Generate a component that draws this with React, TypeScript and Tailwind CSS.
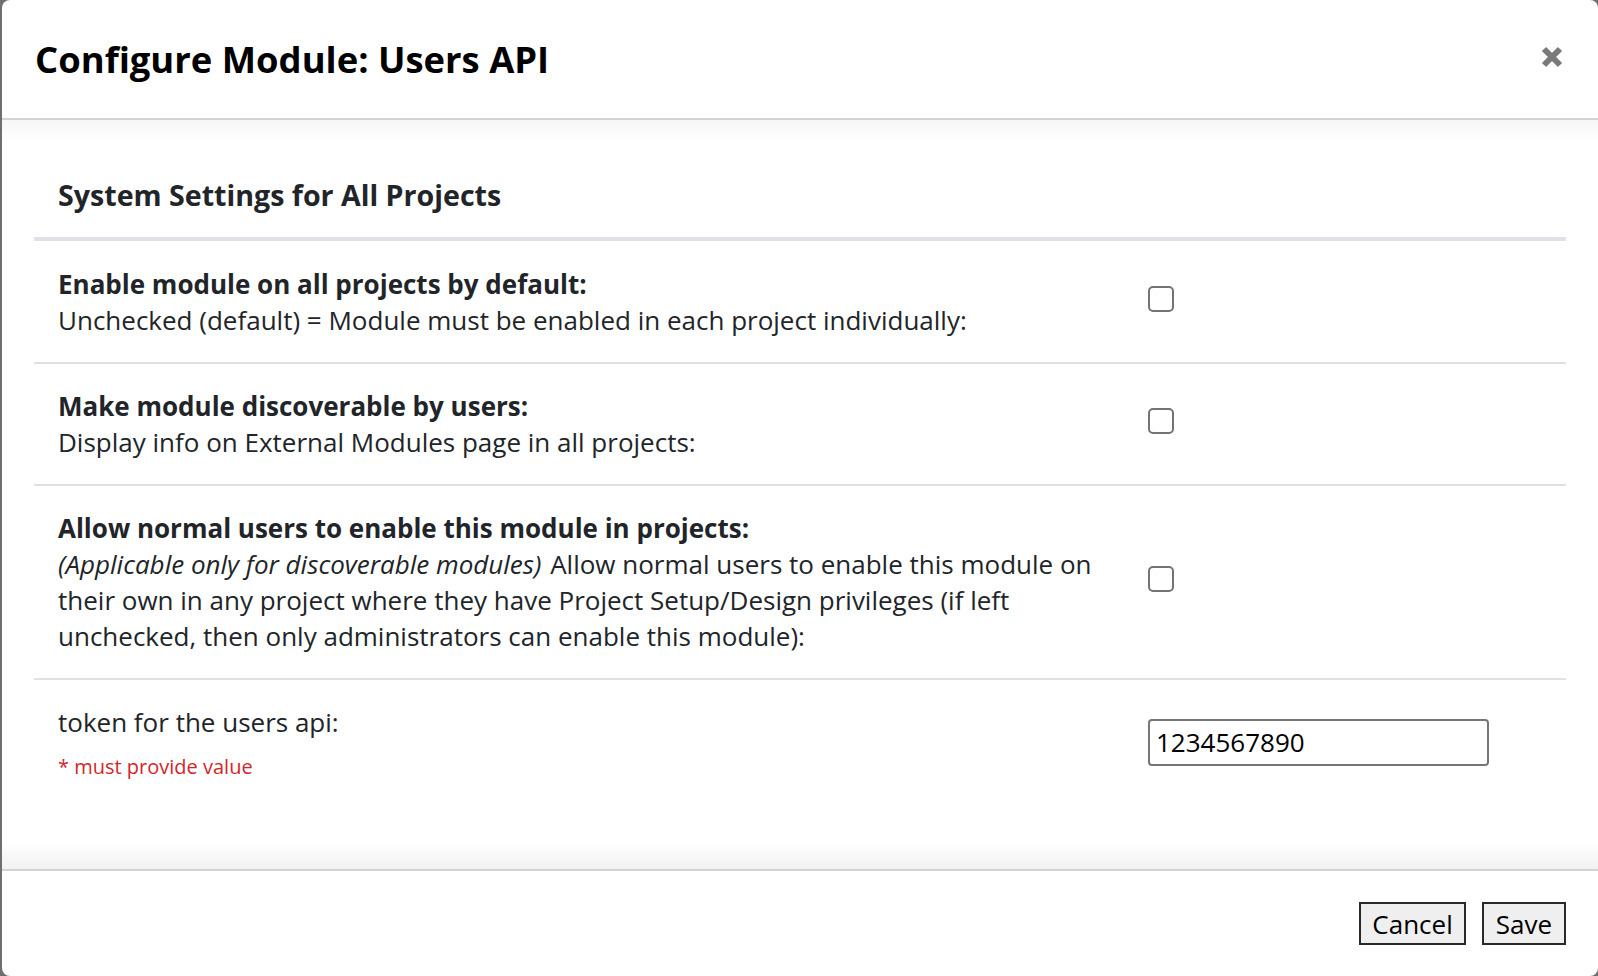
import React from "react";

function Checkbox() {
  return <div className="w-[26px] h-[26px] border-2 border-[#737373] rounded-[5px] bg-white" />;
}

function Row({ children, right }: { children: React.ReactNode; right: React.ReactNode }) {
  return (
    <div className="flex border-b-2 border-[#dee2e6]">
      <div className="w-[1090px] px-[24px] py-[24px] text-[26px] leading-[36px] text-[#212529]">{children}</div>
      <div className="flex-1 px-[24px] flex items-center pb-[6px]">{right}</div>
    </div>
  );
}

export default function App() {
  return (
    <div
      className="w-[1598px] h-[976px] bg-[#6f6f6f] flex pl-[2px] overflow-hidden"
      style={{ fontFamily: "'Open Sans', 'Noto Sans', sans-serif" }}
    >
      <div className="flex-1 bg-white rounded-[8px] flex flex-col overflow-hidden">
        {/* Header */}
        <div className="h-[120px] border-b-2 border-[#d3d3d3] flex items-center justify-between pl-[33px] pr-[35px]">
          <h1 className="text-[36.4px] font-bold leading-none text-black">Configure Module: Users API</h1>
          <svg width="22" height="22" viewBox="0 0 22 22" className="mb-[4px]">
            <path d="M3 3 L19 19 M19 3 L3 19" stroke="#7a7a7a" strokeWidth="6" strokeLinecap="butt" />
          </svg>
        </div>

        {/* Body */}
        <div className="flex-1 flex flex-col bg-[linear-gradient(to_bottom,#f6f6f6,#ffffff_22px,#ffffff_calc(100%_-_28px),#f1f1f1)]">
          <div className="px-[32px]">
            <div className="pl-[24px] pt-[55px] pb-[22px] text-[28.6px] leading-[40px] font-bold text-[#212529]">
              System Settings for All Projects
            </div>
            <div className="border-b-[4px] border-[#dee2e6] mb-[1px]" />

            <Row right={<Checkbox />}>
              <div className="font-bold">Enable module on all projects by default:</div>
              <div>Unchecked (default) = Module must be enabled in each project individually:</div>
            </Row>

            <Row right={<Checkbox />}>
              <div className="font-bold">Make module discoverable by users:</div>
              <div>Display info on External Modules page in all projects:</div>
            </Row>

            <Row right={<Checkbox />}>
              <div className="font-bold">Allow normal users to enable this module in projects:</div>
              <div>
                <i className="pr-[2px]">(Applicable only for discoverable modules)</i> Allow normal users to enable this
                module on their own in any project where they have Project Setup/Design privileges (if left unchecked,
                then only administrators can enable this module):
              </div>
            </Row>

            <div className="flex">
              <div className="w-[1090px] px-[24px] pt-[24px] text-[#212529]">
                <div className="text-[26px] leading-[36px]">token for the users api:</div>
                <div className="text-[20px] leading-[28px] mt-[13px] text-[#d1262b]">* must provide value</div>
              </div>
              <div className="flex-1 px-[24px] pt-[39px]">
                <div className="w-[341px] h-[47px] border-2 border-[#767676] rounded-[4px] flex items-center px-[6px] text-[26px] text-black">
                  1234567890
                </div>
              </div>
            </div>
          </div>
        </div>

        {/* Footer */}
        <div className="h-[107px] border-t-2 border-[#d3d3d3] flex items-center justify-end gap-[16px] pr-[32px]">
          <button className="h-[43px] px-[11px] bg-[#efefef] border-2 border-[#2a2a2a] text-[26px] leading-none text-black">
            Cancel
          </button>
          <button className="h-[43px] px-[12px] bg-[#efefef] border-2 border-[#2a2a2a] text-[26px] leading-none text-black">
            Save
          </button>
        </div>
      </div>
    </div>
  );
}
